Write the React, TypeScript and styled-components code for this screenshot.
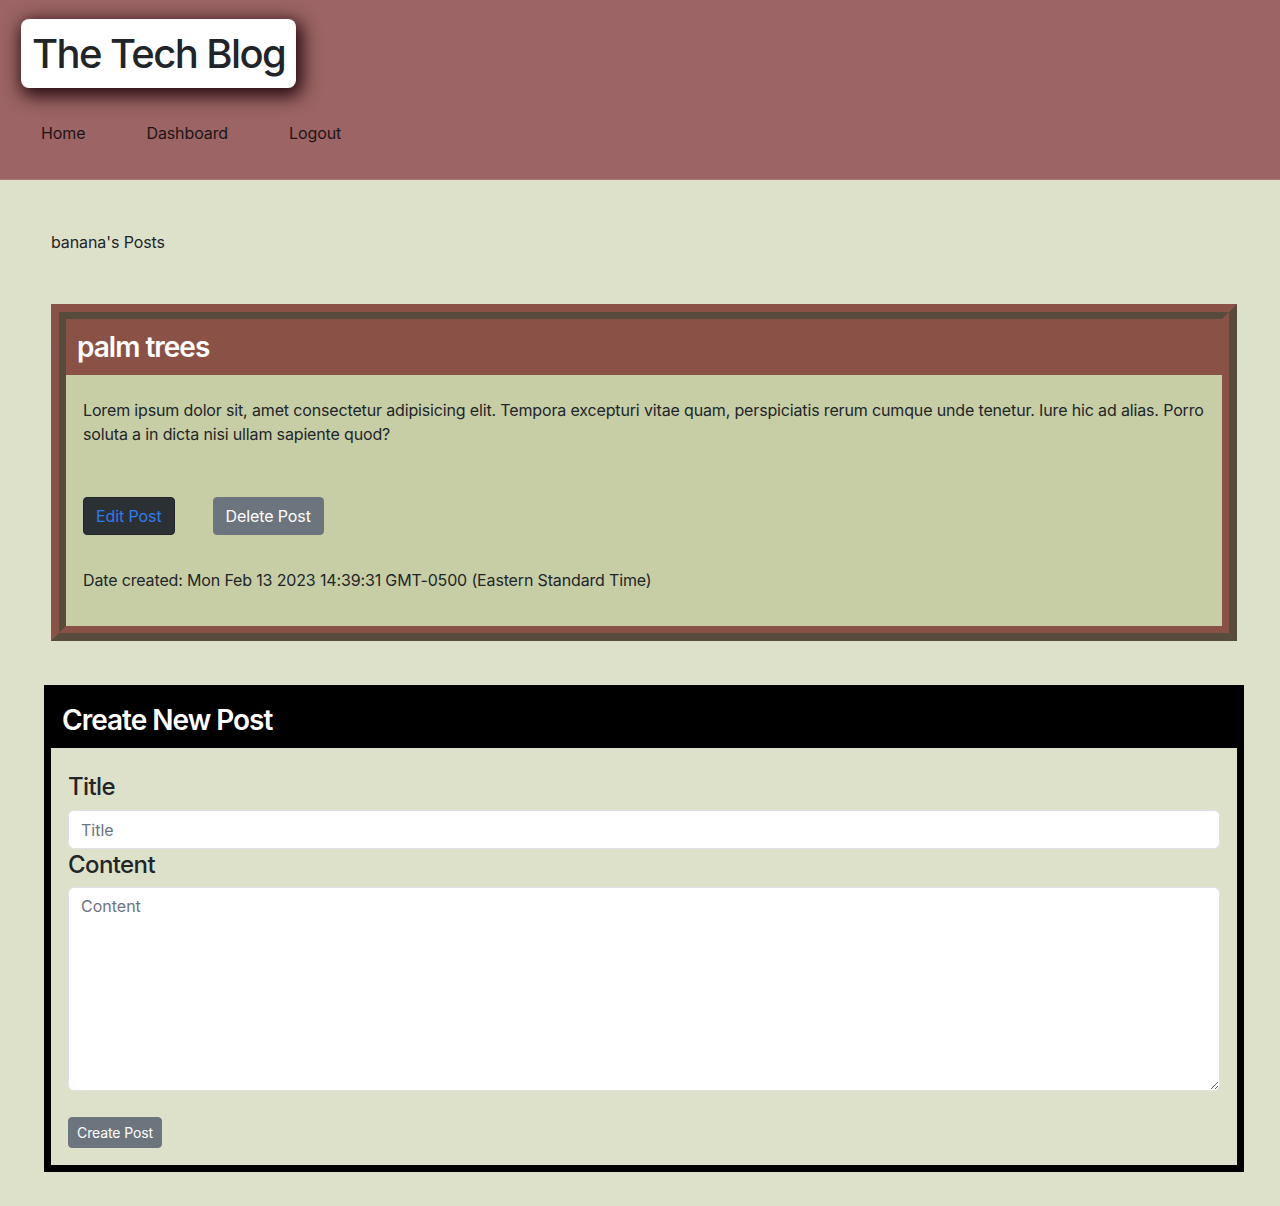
import React from "react";
import styled, { createGlobalStyle } from "styled-components";

const Global = createGlobalStyle`
  html, body { margin: 0; padding: 0; }
  body {
    background: #dee1c9;
    font-family: Inter, "Noto Sans", "Liberation Sans", sans-serif;
    color: #212529;
    font-size: 16px;
    line-height: 1.5;
  }
  * { box-sizing: border-box; }
`;

const Header = styled.header`
  background: #9c6464;
  height: 180px;
  padding: 19px 21px 0;
  border-bottom: 1px solid #a77373;
`;

const TitleBox = styled.h1`
  display: inline-block;
  margin: 0;
  background: #fff;
  border-radius: 8px;
  padding: 0 11px;
  height: 69px;
  line-height: 69px;
  font-size: 40px;
  font-weight: 500;
  color: #212529;
  letter-spacing: -1.6px;
  box-shadow: 3px 5px 18px 3px rgba(25, 0, 6, 0.92);
`;

const Nav = styled.nav`
  display: flex;
  gap: 61px;
  margin-top: 33px;
  padding-left: 20px;
`;

const NavLink = styled.a`
  color: #1d1416;
  text-decoration: none;
  font-size: 16px;
  letter-spacing: -0.1px;
`;

const Main = styled.main`
  padding: 50px 36px 34px 44px;
`;

const SectionTitle = styled.p`
  margin: 0 0 50px 7px;
  font-size: 16px;
  letter-spacing: -0.1px;
`;

const CardOuter = styled.div`
  margin: 0 7px 44px 7px;
  border: 8px solid;
  border-color: #8a5247 #574b3c #574b3c #8a5247;
`;

const CardInner = styled.div`
  border: 7px solid;
  border-color: #574b3c #8a5247 #8a5247 #574b3c;
`;

const CardHeader = styled.div`
  background: #8a5247;
  height: 56px;
  padding: 0 11px;
  display: flex;
  align-items: center;
`;

const CardTitle = styled.h2`
  margin: 0;
  font-size: 28px;
  font-weight: 600;
  color: #fff;
  letter-spacing: -1px;
`;

const CardBody = styled.div`
  background: #c7cea5;
  padding: 23px 12px 34px 17px;
`;

const Text = styled.p<{ $mb?: number }>`
  margin: 0 0 ${(p) => p.$mb ?? 0}px;
  font-size: 16px;
  line-height: 24px;
  letter-spacing: -0.15px;
`;

const ButtonRow = styled.div`
  display: flex;
  gap: 38px;
  margin-bottom: 33px;
`;

const Button = styled.button<{ $variant: "dark" | "secondary"; $small?: boolean }>`
  font-family: inherit;
  border: 1px solid ${(p) => (p.$variant === "dark" ? "#212529" : "#6c757d")};
  background: ${(p) => (p.$variant === "dark" ? "#2b3035" : "#6c757d")};
  color: ${(p) => (p.$variant === "dark" ? "#2f7bf0" : "#fff")};
  font-size: ${(p) => (p.$small ? "14px" : "16px")};
  line-height: ${(p) => (p.$small ? "21px" : "24px")};
  padding: ${(p) => (p.$small ? "4px 8px" : "6px 12px")};
  border-radius: 4px;
  letter-spacing: -0.1px;
  cursor: pointer;
`;

const FormBox = styled.section`
  border: 7px solid #000;
  border-top-width: 6px;
  background: #dee1c9;
`;

const FormHeader = styled.div`
  background: #000;
  height: 57px;
  padding: 0 11px;
  display: flex;
  align-items: center;
`;

const FormBody = styled.form`
  padding: 24px 17px 17px;
  display: flex;
  flex-direction: column;
`;

const Label = styled.label`
  font-size: 24px;
  font-weight: 500;
  line-height: 30px;
  margin-bottom: 8px;
  color: #212529;
  letter-spacing: -0.6px;
`;

const Input = styled.input`
  font-family: inherit;
  font-size: 16px;
  line-height: 24px;
  height: 39px;
  padding: 6px 12px;
  border: 1px solid #dee2e6;
  border-radius: 6px;
  background: #fff;
  color: #212529;
  margin-bottom: 1px;
  &::placeholder { color: #6c757d; }
`;

const TextArea = styled.textarea`
  font-family: inherit;
  font-size: 16px;
  line-height: 24px;
  height: 204px;
  padding: 6px 12px;
  border: 1px solid #dee2e6;
  border-radius: 6px;
  background: #fff;
  resize: vertical;
  margin-top: -1px;
  margin-bottom: 26px;
  &::placeholder { color: #6c757d; }
`;

const ButtonWrap = styled.div`
  display: flex;
`;

export default function App() {
  return (
    <>
      <Global />
      <Header>
        <TitleBox>The Tech Blog</TitleBox>
        <Nav>
          <NavLink href="#">Home</NavLink>
          <NavLink href="#">Dashboard</NavLink>
          <NavLink href="#">Logout</NavLink>
        </Nav>
      </Header>
      <Main>
        <SectionTitle>banana's Posts</SectionTitle>
        <CardOuter>
          <CardInner>
            <CardHeader>
              <CardTitle>palm trees</CardTitle>
            </CardHeader>
            <CardBody>
              <Text $mb={51}>
                Lorem ipsum dolor sit, amet consectetur adipisicing elit. Tempora excepturi vitae quam,
                perspiciatis rerum cumque unde tenetur. Iure hic ad alias. Porro soluta a in dicta nisi
                ullam sapiente quod?
              </Text>
              <ButtonRow>
                <Button $variant="dark">Edit Post</Button>
                <Button $variant="secondary">Delete Post</Button>
              </ButtonRow>
              <Text>Date created: Mon Feb 13 2023 14:39:31 GMT-0500 (Eastern Standard Time)</Text>
            </CardBody>
          </CardInner>
        </CardOuter>
        <FormBox>
          <FormHeader>
            <CardTitle>Create New Post</CardTitle>
          </FormHeader>
          <FormBody onSubmit={(e) => e.preventDefault()}>
            <Label htmlFor="title">Title</Label>
            <Input id="title" placeholder="Title" />
            <Label htmlFor="content">Content</Label>
            <TextArea id="content" placeholder="Content" />
            <ButtonWrap>
              <Button $variant="secondary" $small>Create Post</Button>
            </ButtonWrap>
          </FormBody>
        </FormBox>
      </Main>
    </>
  );
}
